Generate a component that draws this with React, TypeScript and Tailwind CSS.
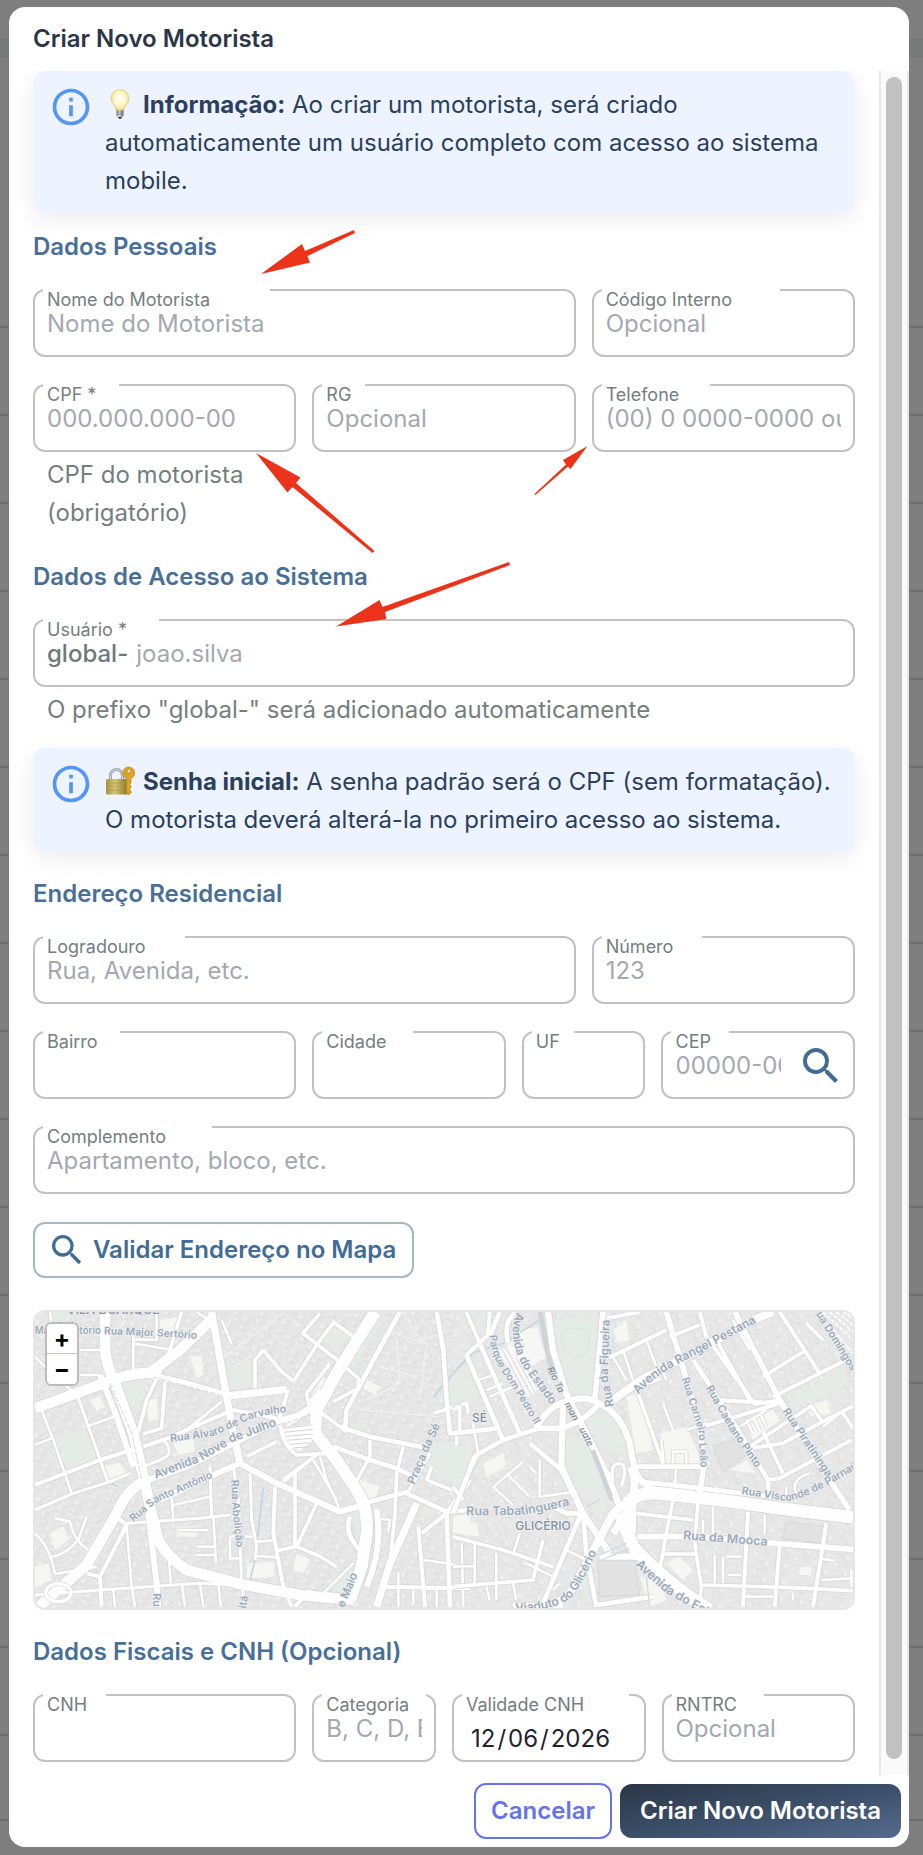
import { useId, type ReactNode } from 'react'
import { MdInfoOutline, MdSearch } from 'react-icons/md'

interface FieldProps {
  label: string
  notch: string
  span: string
  placeholder?: string
  type?: string
  defaultValue?: string
  prefix?: string
  helper?: string
  action?: ReactNode
}

function Field({ label, notch, span, placeholder, type = 'text', defaultValue, prefix, helper, action }: FieldProps) {
  const id = useId()
  const isDate = type === 'date'

  return (
    <div className={`min-w-0 ${span}`}>
      <div className="relative flex h-[68px] items-center rounded-xl border-2 border-[#c2c2c2] px-3 pt-0.5">
        <span className={`absolute -top-0.5 left-2 h-[3px] bg-white ${notch}`} />
        <label htmlFor={id} className="absolute -top-px left-3 text-[18px] leading-5 whitespace-nowrap text-[#748080]">
          {label}
        </label>
        {prefix && <span className="mr-2 font-medium text-[#6c7a7a]">{prefix}</span>}
        <input
          id={id}
          type={type}
          placeholder={placeholder}
          defaultValue={defaultValue}
          className={`h-8 w-full min-w-0 flex-1 bg-transparent text-[#1f2430] outline-none placeholder:text-[#a3a8b1] ${
            isDate
              ? 'mt-5 pl-1 [&::-webkit-calendar-picker-indicator]:hidden [&::-webkit-datetime-edit-text]:px-px'
              : ''
          }`}
        />
        {action}
      </div>
      {helper && <p className="px-3.5 pt-1 leading-[38px] text-[#748080]">{helper}</p>}
    </div>
  )
}

function SectionTitle({ children, className = '' }: { children: ReactNode; className?: string }) {
  return <h3 className={`mb-[25px] leading-[34px] font-semibold text-[#486f98] ${className}`}>{children}</h3>
}

function InfoAlert({ children }: { children: ReactNode }) {
  return (
    <div className="flex gap-3 rounded-xl bg-[#eef4ff] px-4 py-3.5 text-[#2b405c] shadow-[0_6px_24px_rgba(0,0,0,0.08)]">
      <MdInfoOutline className="size-11 shrink-0 text-[#5495f7]" />
      <p className="-mb-px pt-px leading-[38px]">{children}</p>
    </div>
  )
}

function BulbIcon() {
  return (
    <svg viewBox="0 0 30 30" role="img" aria-label="Lâmpada" className="mr-2 inline-block size-[30px] align-[-6px]">
      <defs>
        <radialGradient id="bulb" cx="50%" cy="45%" r="55%">
          <stop offset="0" stopColor="#fffef4" />
          <stop offset="0.6" stopColor="#fdf7c8" />
          <stop offset="1" stopColor="#e8d179" />
        </radialGradient>
        <linearGradient id="bulbBase">
          <stop offset="0" stopColor="#7d7d7d" />
          <stop offset="0.4" stopColor="#dedede" />
          <stop offset="1" stopColor="#666" />
        </linearGradient>
      </defs>
      <path d="M15 .5C9.500 .5 6 4.500 6 9.500c0 5 4.200 6.500 5.200 12h7.600c1-5.500 5.200-7 5.200-12C24 4.500 20.500 .5 15 .5z" fill="url(#bulb)" stroke="#dcc87c" strokeWidth="0.600" />
      <path d="M11.500 21h7v5.500l-2 2.500h-3l-2-2.500z" fill="url(#bulbBase)" />
      <path d="M11.500 23h7M11.500 25.300h7" stroke="#777" strokeWidth="0.700" />
      <path d="M13 28h4l-1 1.800h-2z" fill="#333" />
    </svg>
  )
}

function LockKeyIcon() {
  return (
    <svg viewBox="0 0 30 30" role="img" aria-label="Cadeado com chave" className="mr-2 inline-block size-[30px] align-[-6px]">
      <defs>
        <linearGradient id="lockBody">
          <stop offset="0" stopColor="#a8923a" />
          <stop offset="0.4" stopColor="#d2c878" />
          <stop offset="1" stopColor="#857526" />
        </linearGradient>
      </defs>
      <path d="M5.500 15V9.500a6 6 0 0 1 12 0V15" fill="none" stroke="#98a4ae" strokeWidth="3" />
      <path d="M5.500 15V9.500a6 6 0 0 1 12 0V15" fill="none" stroke="#d5dce2" strokeWidth="1" />
      <rect x="1" y="13" width="22" height="15.500" rx="1.500" fill="url(#lockBody)" />
      <path d="M1.500 17h21M1.500 20.500h21M1.500 24h21" stroke="#a8953c" strokeWidth="0.600" />
      <path d="M24 1a6 6 0 0 0-2.500 11.500v14.500l2 2 2.500-2v-2l-1.500-1.500 1.500-1.500v-2l-1.500-1.500 1.500-1.500v-4.500A6 6 0 0 0 24 1zm0 2.500a1.800 1.800 0 1 1 0 3.600A1.800 1.800 0 0 1 24 3.500z" fill="#dfa222" stroke="#b97f12" strokeWidth="0.600" fillRule="evenodd" />
    </svg>
  )
}

type Road = [number, string]

const westRoads: Road[] = [
  [8, 'M105 170L140 205L235 290M240 150H310M240 225H300M400 130L520 150M400 80V215M470 36V120L400 118M150 36L155 70M590 36L640 70M665 60L695 132M125 330L160 420L215 580M265 378L355 345M105 435L155 415'],
  [8, 'M515 590L520 660M590 740H645M585 765H645M535 690H625M520 615L630 590M105 700Q150 740 165 822L290 800M150 770Q190 770 235 720L260 650M165 655L210 665Q220 720 265 750M690 710L690 775L720 775M690 710H760'],
  [8, 'M600 850L610 920M545 850L555 920M655 850L662 920M340 870L345 920M380 680L395 860L405 920M505 740L512 850M640 650L648 790M770 725L820 722M770 768L830 772M960 470L980 540L1020 630M940 480L1010 600M1165 690L1170 660L1130 655V780M1195 820V920M1060 790L970 880M1270 780L1410 800M1240 870V910M1310 870V920M1385 730L1390 920'],
  [9, 'M235 295L290 450L325 550M105 630L220 580L330 545L390 520M490 420Q530 460 480 480L430 500M560 390L665 305M380 670L600 655L690 645M105 885L300 870L600 850L720 855M630 500L635 650M750 520L755 660L770 740L765 780M700 500L715 600L725 850L735 920'],
  [11, 'M545 36L510 150L440 300L415 395M495 245L485 385L430 402M790 150L765 180V265M790 150L840 210L882 245M960 40L908 100L1000 170L1075 235V265L1000 305M1005 62L950 135L882 242M865 270L835 365M1000 65L1060 110M990 190L920 280L925 310L960 270'],
  [11, 'M885 520V740L830 752M950 610L890 740L958 768L1010 800M850 540L955 460L850 545M740 470L830 425M840 375Q850 440 890 465L980 460M965 340L1040 395M1110 420V470L1060 560M1210 440L1190 520L1185 640L1170 790M1290 460L1225 575M1295 500L1280 540L1380 580M1300 340L1400 310L1405 340M1370 400V450'],
  [12, 'M350 650L380 675L300 830L305 920M260 820L300 830M1255 680L1275 920M1140 860L1410 865M1265 700L1340 640M430 440L510 412L600 372L700 330L830 355M105 555L300 480L410 445M825 560L820 700L850 860L875 920M930 870L885 920'],
  [14, 'M1200 36L1120 180L1040 330L1035 390M1020 380L1110 410L1270 442M1000 440L1110 480L1190 505L1240 530M1220 580L1340 635L1410 630M1340 640L1350 920M1310 36L1330 150L1340 300L1350 400L1410 398M1410 540L1340 640M1090 610L1225 575M1050 650Q1030 700 1080 750'],
  [18, 'M450 225L560 250L680 285M720 490L830 550L1020 635L1090 615M430 545L560 500L700 430L830 365L900 345L950 320M480 600L640 525L720 490M445 640L470 850L475 920M300 225L350 350L400 500M1130 630Q1150 740 1100 860'],
  [22, 'M635 36L655 150L680 290L700 400L720 490M680 288L860 268M1250 610L1170 790L1130 920M1010 220L940 320L860 370'],
  [32, 'M105 325L320 247Q370 222 450 218L540 150L638 55M315 36V150Q320 200 345 250L400 400L430 530L455 640L475 720Q500 770 560 810L720 852L900 885L1060 900M105 930L180 865L260 795L350 640Q380 570 430 545'],
  [36, 'M1125 36L1010 220L950 330L945 400L1010 480L1070 570Q1105 620 1100 700L1085 800L1050 900'],
]

const eastRoads: Road[] = [
  [8, 'M120 560L180 615M120 562L210 485M160 520L230 590M260 480V590L370 575M230 500L250 520M0 800L62 798M65 730V860M200 700L180 765M340 750L400 780M130 760V900M180 850L190 900M220 790L300 830M300 870L320 850M100 860L110 900M180 260L110 290M60 370L75 460M75 240L120 225M100 270L150 250'],
  [8, 'M480 170L520 240M510 150L540 240M580 120L610 200M565 260L625 235M630 310L660 390M670 500L665 560M625 420L632 490M660 490V455H700V490M780 620V700M750 660V700M810 770V850M785 765V850M820 770H865M825 825H865M875 890H960M1100 775L1145 782M1105 840L1200 835M1195 810V860M1020 880V900M935 645V700'],
  [8, 'M860 380L940 330M880 360L900 400M900 350L920 390M920 340L940 380M790 560V580M1000 560V600M1030 580Q1010 540 1070 520M620 190L640 240M700 390L760 370M1110 380L1150 350M840 60L890 150'],
  [11, 'M650 110L740 75M930 230L1060 150M1060 70L1110 120M550 265L630 490M930 395L990 520M890 440L980 380L1075 318L1105 362M1170 340L1200 385M0 860L240 840L270 720M0 710L150 750L300 800M735 610L725 730L745 860L740 920M660 600L640 700L622 800M628 762H725M550 640L720 660M740 855L1000 862L1200 872M20 580L70 470M30 600L0 560M20 400V320L0 330'],
  [12, 'M470 172L640 90M960 290L1180 180M740 36L760 110L905 312L985 300M790 120L890 300M980 36L1100 220L1180 180M1200 318L1080 380L990 430L890 445M885 635L870 920M980 740L965 920M1120 670L1080 920M1195 420L980 535L945 540M40 36L80 130M110 36L105 105L40 165M460 55L560 36M780 300L980 310L750 380'],
  [14, 'M550 500H760M560 545L700 560L870 580L960 590M40 165L150 420M80 130L200 400M0 400L135 385M0 640L65 470L80 460L150 420L260 385M230 430L325 510L390 640M385 640L270 910M390 640L400 760L430 920M390 640H340L300 620M720 180L760 240L880 430L945 540V580M430 915L600 890M190 36Q150 60 165 130M140 36L110 110'],
  [17, 'M640 36L680 170L740 370L752 500L740 580M845 36L980 300L1110 510L1190 630M555 710L740 710L900 725L1200 748M450 36L440 150L425 300M260 385H330Q400 360 440 310M545 600L530 700'],
  [19, 'M285 36L300 150L340 280L400 400L470 540L500 620M330 300L325 500L390 640L470 760M250 385Q290 295 400 295Q500 320 530 430L545 510Q565 560 620 575M440 770L560 770'],
  [10, 'M480 545Q470 492 498 490Q528 494 505 560'],
  [24, 'M480 300L560 242L700 170L900 60L960 36M535 500L545 540Q545 620 480 700M180 920H330M540 590L480 640L400 790L350 880L300 920'],
  [38, 'M530 600Q570 575 620 580L800 600L1000 628L1200 652M500 640L540 740Q640 850 770 930M530 590V700'],
]

const westParks = [
  'M165 410L255 390L290 480L200 505z', 'M370 250L440 252L405 350z', 'M680 200L750 180L755 260L690 270z',
  'M970 110L1010 70L1050 110L1000 150z', 'M1110 80L1150 50L1060 210L1035 190z', 'M1300 430L1410 440L1380 560L1280 510z',
  'M1345 250L1410 170V290L1350 310z', 'M1060 650L1085 640V760z', 'M1040 800L1060 860L985 890z', 'M1260 620L1330 630L1270 660z',
  'M145 36H235L150 75z', 'M610 290L650 285L620 320z', 'M480 740L510 780L480 775z', 'M1045 370L1110 370L1080 395z',
]

const eastParks = [
  'M300 60L430 50L425 290L345 280z', 'M400 360L450 335L490 370L520 470L440 440z', 'M335 400L400 420L450 560L460 640L420 630L335 490z',
  'M0 430L60 460L20 560H0z', 'M1000 300L1175 205L1180 255L1050 312z', 'M60 60L110 40L70 110z', 'M0 190L60 250L80 310L0 300z',
  'M380 850L400 800L410 920z', 'M150 500L200 470V510z',
]

const westPatches = 'M270 300l30-10 15 30-25 15zM440 300l30-5 5 60-30 10zM570 170l35-5 5 60-20 10zM860 370l35 20-30 40zM1080 540l60 20-20 50-40-20zM740 790l80-5 5 45-85 5zM150 700l40-20 15 40-40 30zM105 800l40-10 10 50-50 20zM520 430l60-15 5 40-50 10zM300 500l60-10 20 30-60 20zM530 680h60v30h-60zM1360 650l50-10v60l-50-5zM1100 240l40 20-15 25-35-20zM930 290l40-60 20 15-40 70zM480 60l60-10-10 60-50-5zM890 760l40 20-20 40-30-10z'
const eastPatches = 'M210 90l40-10 30 90-60 40-60-70zM320 200l80-15 10 80-60 20zM520 290l40-10 40 170-50 10zM620 400l80-20 50 110h-110zM480 90l40-30 10 60-35 10zM880 370l80-40 20 30-80 60zM830 510l50-30 30 40zM640 790l40-20 40 40-30 30zM1040 800h35v25h-35zM1060 320l60-20 15 40-60 10zM560 830l60 10 20 60-50 20zM0 660l70 10 10 40-80-10zM90 490l60-30 10 40-60 30z'

function Roads({ roads }: { roads: Road[] }) {
  return (
    <g fill="none" strokeLinejoin="round">
      {roads.map(([w, d]) => (
        <path key={'c' + d} d={d} stroke="#d8d8d8" strokeWidth={w + 5} />
      ))}
      {roads.map(([w, d]) => (
        <path key={d} d={d} stroke="#fefefe" strokeWidth={w} />
      ))}
    </g>
  )
}

interface Street {
  name: string
  d: string
  size: number
}

const westStreets: Street[] = [
  { name: 'Ma', d: 'M104 103H160', size: 29 },
  { name: 'tório', d: 'M238 103H312', size: 29 },
  { name: 'Rua Major Sertório', d: 'M312 103L460 108L640 120', size: 31 },
  { name: 'Rua Álvaro de Carvalho', d: 'M512 426L640 408L720 372Q780 338 900 336', size: 32 },
  { name: 'Avenida Nove de Julho', d: 'M467 536L600 485L700 425L880 358', size: 36 },
  { name: 'Rua Santo Antônio', d: 'M400 666L470 607L700 506', size: 31 },
  { name: 'Rua Abolição', d: 'M693 540L699 640L714 790', size: 32 },
  { name: 'Praça da Sé', d: 'M1243 555L1290 442L1340 335', size: 34 },
  { name: 'e Maio', d: 'M1032 925L1090 780', size: 34 },
  { name: 'Ru', d: 'M458 880V940', size: 32 },
  { name: 'itá', d: 'M738 926L748 860', size: 32 },
]

const eastStreets: Street[] = [
  { name: 'Parque Dom Pedro II', d: 'M110 106Q115 180 165 240L270 415', size: 31 },
  { name: 'Avenida do Estado', d: 'M192 36Q160 110 210 200L330 364', size: 35 },
  { name: 'Rua da Figueira', d: 'M482 318L464 230L472 10', size: 35 },
  { name: 'Avenida Rangel Pestana', d: 'M556 284Q600 230 680 190L960 41', size: 36 },
  { name: 'Rua Carneiro Leão', d: 'M686 236L736 390L747 550', size: 31 },
  { name: 'Rua Caetano Pinto', d: 'M758 264L830 390L930 535', size: 32 },
  { name: 'Rua Piratininga', d: 'M988 334L1150 576', size: 33 },
  { name: 'ua Domingos', d: 'M1088 42L1210 240', size: 32 },
  { name: 'Rua Visconde de Parnaíba', d: 'M865 582L1000 603Q1070 600 1300 448', size: 32 },
  { name: 'Rua da Mooca', d: 'M690 718L980 740', size: 37 },
  { name: 'Rua Tabatinguera', d: 'M40 646L200 645Q280 635 400 602', size: 37 },
  { name: 'Viaduto do Glicério', d: 'M187 936Q330 930 365 880Q400 830 455 700', size: 36 },
  { name: 'Avenida do Estado', d: 'M546 796L640 880L820 980', size: 37 },
]

function Streets({ streets, prefix }: { streets: Street[]; prefix: string }) {
  return (
    <g fill="#9aabbb" fontWeight="600" stroke="#f1f1f1" strokeWidth="5" paintOrder="stroke">
      {streets.map(({ name, d, size }, i) => (
        <g key={prefix + i}>
          <path id={prefix + i} d={d} fill="none" stroke="none" />
          <text fontSize={size}>
            <textPath href={`#${prefix}${i}`}>{name}</textPath>
          </text>
        </g>
      ))}
    </g>
  )
}

function CityMap() {
  return (
    <svg viewBox="105 36 2454 888" preserveAspectRatio="xMidYMid slice" className="block h-full w-full" aria-label="Mapa">
      <defs>
        <pattern id="blocks" width="54" height="46" patternUnits="userSpaceOnUse" patternTransform="rotate(-18)">
          <rect width="54" height="46" fill="#e8e8e8" />
          <path d="M0 8h22v10h14v-6h18M6 18v14h16M30 24h20M36 24v16M12 38h18M46 0v10M24 28v10" fill="none" stroke="#d9d9d9" strokeWidth="2" />
          <path d="M26 2h10v7h-10zM8 22h9v7h-9z" fill="#f1f1ef" />
        </pattern>
        <pattern id="lots" width="60" height="50" patternUnits="userSpaceOnUse" patternTransform="rotate(8)">
          <rect width="60" height="50" fill="#e8e8e8" />
          <path d="M4 6h26v12M38 4v20h16M8 30h14v14M30 34h24M44 34v12" fill="none" stroke="#dadada" strokeWidth="2" />
          <path d="M42 8h9v9h-9zM10 34h8v7h-8z" fill="#f1f1ef" />
        </pattern>
      </defs>
      <rect x="105" y="36" width="1400" height="888" fill="url(#blocks)" />
      <rect x="1359" y="36" width="1200" height="888" fill="url(#lots)" />
      <path d={westPatches} fill="#f6f6f4" />
      <g fill="#e5ebe6">
        {westParks.map(d => (
          <path key={d} d={d} />
        ))}
      </g>
      <g fill="none" stroke="#fafafa" strokeWidth="4" strokeDasharray="4 4">
        <path d="M880 60L1000 180M1080 330L1320 350M1180 100L1280 130L1260 300M660 180L740 120L850 40M1210 36L1260 120L1330 100M700 200L770 160M1140 200L1250 230M1100 300L1200 250L1190 120M320 120L380 60" />
      </g>
      <g fill="none" stroke="#c9d3dc" strokeWidth="5">
        <path d="M1300 290L1400 175M325 545L355 560M750 840L765 780L790 560" />
      </g>
      <Roads roads={westRoads} />
      <g fill="none">
        <ellipse cx="175" cy="878" rx="38" ry="27" stroke="#dcdcdc" strokeWidth="14" />
        <ellipse cx="175" cy="878" rx="38" ry="27" stroke="#fefefe" strokeWidth="10" />
      </g>
      <path d="M842 385L938 372L935 425L900 452L872 445z" fill="#fefefe" />
      <g fill="none" stroke="#d4d4d4" strokeWidth="3">
        <path d="M850 385L935 375M852 397L938 388M856 409L938 402M862 421L936 415M870 433L932 428M880 444L928 440" />
        <path d="M460 232L670 288M330 250L395 400L425 540M860 370L925 345" strokeDasharray="16 6" />
      </g>

      <g transform="translate(1359 0)">
        <path d={eastPatches} fill="#f6f6f3" />
        <g fill="#e5ebe6">
          {eastParks.map(d => (
            <path key={d} d={d} />
          ))}
        </g>
        <path d="M435 780L545 775L560 885L440 890zM780 440L850 415L875 470L810 515zM1000 665L1115 680L1105 730L990 715z" fill="#e2e2e2" stroke="#d6d6d6" strokeWidth="3" />
        <path d="M325 100Q360 70 410 100L405 160Q370 180 330 150z" fill="none" stroke="#d3d8d3" strokeWidth="3" strokeDasharray="4 4" />
        <path d="M0 220L60 160L150 130L260 60" fill="none" stroke="#cbd5dd" strokeWidth="5" />
        <path d="M140 150L215 290M153 146L228 286M166 142L241 282M180 140L250 272M192 138L262 262" stroke="#fdfdfd" strokeWidth="6" />
        <path d="M1110 36L1200 120M1130 36L1200 95M1150 36L1200 75M1140 90L1200 160M1170 36L1200 55" stroke="#fbfbfb" strokeWidth="6" strokeDasharray="12 5" />
        <path d="M262 36L280 140L300 210M415 440L478 600" fill="none" stroke="#ccd4d8" strokeWidth="15" />
        <Roads roads={eastRoads} />
        <path d="M262 36L280 140L290 190M420 450L474 590" fill="none" stroke="#ccd4d8" strokeWidth="13" />
        <path d="M440 765L520 730M445 780L530 745M400 620L440 600M580 830L590 920" fill="none" stroke="#d2d8dc" strokeWidth="4" />
      </g>

      <g fontFamily="Inter, sans-serif">
        <text x="200" y="43" fontSize="38" fontWeight="500" fill="#8b98a8">VILA BUARQUE</text>
        <Streets streets={westStreets} prefix="west" />
        <g transform="translate(1359 0)">
          <Streets streets={eastStreets} prefix="east" />
          <g fill="#7c90a0" fontSize="28" fontStyle="italic" fontWeight="500">
            <text transform="translate(282 206) rotate(64)">Rio Ta</text>
            <text transform="translate(334 312) rotate(62)">man</text>
            <text transform="translate(378 388) rotate(62)">uate</text>
          </g>
          <g fill="#8391a3" fontSize="36" fontWeight="500" stroke="#f1f1f1" strokeWidth="5" paintOrder="stroke">
            <text x="57" y="366">SÉ</text>
            <text x="187" y="690">GLICÉRIO</text>
          </g>
        </g>
      </g>
    </svg>
  )
}

// List rows dimmed behind the dialog
const backdropRows = Array.from({ length: 17 }, (_, i) => i)

function Backdrop() {
  return (
    <div className="absolute inset-0 overflow-hidden bg-[#7e7e7e]" aria-hidden="true">
      <div className="h-[39px]" />
      <div className="h-[18px] bg-[#777a79]" />
      <div className="h-[183px]" />
      {backdropRows.map(i => (
        <div key={i} className="h-[88px] border-b-2 border-[#6d6d6d]" />
      ))}
      <div className="h-[85px] border-b-2 border-[#6d6d6d]" />
    </div>
  )
}

function Arrows() {
  return (
    <svg className="pointer-events-none absolute top-0 left-0 h-[700px] w-[700px]" viewBox="0 0 700 700" fill="#ec3219" aria-hidden="true">
      <path d="M261 274L302 244L305 251L354 230L355 233L307.500 256L310 262.500z" />
      <path d="M256 453L300.500 477.500L296 483L374.500 551L372.500 553L292.500 487L287.500 492.500z" />
      <path d="M336 626.500L379.500 600L382.500 607L509 562L510 565L385 612L386.500 619z" />
      <path d="M587.500 446L563 460L566 464.500L534.500 494L535.500 495L568 466.500L570.500 469z" />
    </svg>
  )
}

export default function App() {
  return (
    <div className="relative min-h-screen pt-[7px] pr-3.5 pb-2 pl-[9px] font-['Inter',sans-serif] text-[24px]">
      <Backdrop />
      <div role="dialog" aria-labelledby="dialog-title" className="relative overflow-hidden rounded-2xl bg-white">
        <h2 id="dialog-title" className="px-6 py-3 leading-10 font-semibold text-[#2b3647]">
          Criar Novo Motorista
        </h2>

        <div className="flex overflow-hidden">
          <form id="driver-form" className="min-w-0 flex-1 px-6 pb-[13px]">
            <InfoAlert>
              <BulbIcon />
              <strong className="font-bold">Informação:</strong> Ao criar um motorista, será criado automaticamente um
              usuário completo com acesso ao sistema mobile.
            </InfoAlert>

            <SectionTitle className="mt-[17px]">Dados Pessoais</SectionTitle>
            <div className="grid grid-cols-12 gap-x-4 gap-y-[27px]">
              <Field label="Nome do Motorista" placeholder="Nome do Motorista" span="col-span-8" notch="w-[227px]" />
              <Field label="Código Interno" placeholder="Opcional" span="col-span-4" notch="w-[178px]" />
              <Field label="CPF *" placeholder="000.000.000-00" helper="CPF do motorista (obrigatório)" span="col-span-4" notch="w-[76px]" />
              <Field label="RG" placeholder="Opcional" span="col-span-4" notch="w-[43px]" />
              <Field label="Telefone" placeholder="(00) 0 0000-0000 ou (00) 0000-0000" span="col-span-4" notch="w-[108px]" />
            </div>

            <SectionTitle className="mt-7">Dados de Acesso ao Sistema</SectionTitle>
            <div className="mb-[19px] grid grid-cols-12">
              <Field
                label="Usuário *"
                prefix="global-"
                placeholder="joao.silva"
                helper={'O prefixo "global-" será adicionado automaticamente'}
                span="col-span-12"
                notch="w-[116px]"
              />
            </div>

            <InfoAlert>
              <LockKeyIcon />
              <strong className="font-bold">Senha inicial:</strong> A senha padrão será o CPF (sem formatação). O motorista
              deverá alterá-la no primeiro acesso ao sistema.
            </InfoAlert>

            <SectionTitle className="mt-[25px]">Endereço Residencial</SectionTitle>
            <div className="grid grid-cols-12 gap-x-4 gap-y-[27px]">
              <Field label="Logradouro" placeholder="Rua, Avenida, etc." span="col-span-8" notch="w-[142px]" />
              <Field label="Número" placeholder="123" span="col-span-4" notch="w-[100px]" />
              <Field label="Bairro" span="col-span-4" notch="w-[77px]" />
              <Field label="Cidade" span="col-span-3" notch="w-[91px]" />
              <Field label="UF" span="col-span-2" notch="w-[42px]" />
              <Field
                label="CEP"
                placeholder="00000-000"
                span="col-span-3"
                notch="w-[58px]"
                action={
                  <button type="button" aria-label="Buscar CEP" className="-mr-1 ml-4 shrink-0 text-[#416c96]">
                    <MdSearch className="size-12" />
                  </button>
                }
              />
              <Field label="Complemento" placeholder="Apartamento, bloco, etc." span="col-span-12" notch="w-[169px]" />
            </div>

            <button
              type="button"
              className="mt-7 flex h-14 items-center gap-1.5 rounded-xl border-2 border-[#a2b6ca] pr-4 pl-3 font-semibold text-[#416c96]"
            >
              <MdSearch className="size-10" />
              Validar Endereço no Mapa
            </button>

            <div className="relative mt-8 h-[300px] overflow-hidden rounded-xl border-2 border-[#e6e6e6]">
              <CityMap />
              <div className="absolute top-2.5 left-2.5 flex flex-col rounded-md border-2 border-[#bcbcbc] bg-white text-[24px] font-bold text-black">
                <button type="button" aria-label="Aproximar" className="h-[30px] w-[30px] border-b border-[#c4c4c4] leading-[28px]">
                  +
                </button>
                <button type="button" aria-label="Afastar" className="h-[30px] w-[30px] leading-[28px]">
                  −
                </button>
              </div>
            </div>

            <SectionTitle className="mt-[25px]">Dados Fiscais e CNH (Opcional)</SectionTitle>
            <div className="grid grid-cols-12 gap-x-4">
              <Field label="CNH" span="col-span-4" notch="w-[63px]" />
              <Field label="Categoria" placeholder="B, C, D, E" span="col-span-2" notch="w-[104px]" />
              <Field label="Validade CNH" type="date" defaultValue="2026-12-06" span="col-span-3" notch="w-[167px]" />
              <Field label="RNTRC" placeholder="Opcional" span="col-span-3" notch="w-[92px]" />
            </div>
          </form>

          <div className="flex w-[30px] shrink-0 justify-center border-x-2 border-[#e8e8e8] bg-[#fafafa] pt-1.5 pb-4">
            <div className="w-4 rounded-full bg-[#c1c1c1]" />
          </div>
        </div>

        <div className="flex items-center justify-end gap-2 p-2 font-semibold">
          <button type="button" className="h-14 rounded-xl border-2 border-[#6574ea] px-[15px] text-[#6574ea]">
            Cancelar
          </button>
          <button
            type="submit"
            form="driver-form"
            className="h-[54px] rounded-xl bg-linear-to-br from-[#2b3647] via-[#3b4f69] to-[#566a8f] px-5 text-white"
          >
            Criar Novo Motorista
          </button>
        </div>
      </div>
      <Arrows />
    </div>
  )
}
